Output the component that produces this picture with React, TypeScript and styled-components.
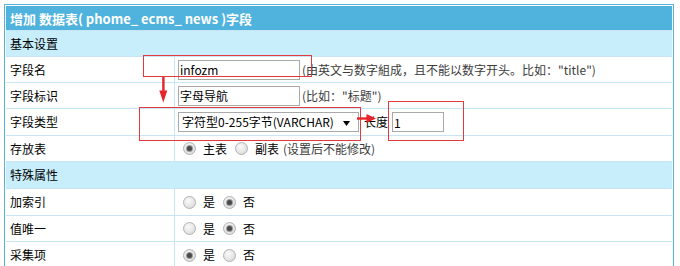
import React from "react";
import styled, { createGlobalStyle } from "styled-components";

const GlobalStyle = createGlobalStyle`
  html, body { margin: 0; padding: 0; background: #fff; }
  body {
    font-family: "Noto Sans CJK SC", sans-serif;
    font-size: 12px;
    color: #000;
  }
`;

const Page = styled.div`
  position: relative;
  width: 680px;
  height: 266px;
  overflow: hidden;
  box-sizing: border-box;
  padding: 4px 0 0 4px;
`;

const Frame = styled.div`
  width: 670px;
  box-sizing: border-box;
  border: 1px solid #58b3dd;
  padding: 1px;
  background: #fff;
`;

const Grid = styled.div`
  display: grid;
  grid-template-columns: 168px 497px;
  gap: 1px;
  background: #c6e6f6;
`;

const Header = styled.div`
  grid-column: 1 / -1;
  height: 24px;
  box-sizing: border-box;
  padding-left: 4px;
  display: flex;
  align-items: center;
  background: #4fb3dd;
  color: #fff;
  font-family: "Noto Sans CJK SC", sans-serif;
  font-weight: bold;
  font-size: 13px;
  white-space: pre;
`;

const Section = styled.div<{ $h: number }>`
  grid-column: 1 / -1;
  height: ${(p) => p.$h}px;
  box-sizing: border-box;
  padding-left: 4px;
  display: flex;
  align-items: center;
  background: #c8eefc;
  line-height: 16px;
`;

const Label = styled.div<{ $h: number }>`
  height: ${(p) => p.$h}px;
  box-sizing: border-box;
  padding-left: 4px;
  display: flex;
  align-items: center;
  background: #fff;
  line-height: 16px;
`;

const Value = styled.div<{ $h: number }>`
  height: ${(p) => p.$h}px;
  box-sizing: border-box;
  padding-left: 3px;
  display: flex;
  align-items: center;
  background: #fff;
  line-height: 16px;
  white-space: nowrap;
`;

const TextInput = styled.input<{ $w: number }>`
  width: ${(p) => p.$w}px;
  height: 20px;
  box-sizing: border-box;
  margin: 0;
  padding: 0 1px;
  border: 1px solid #a9a9a9;
  background: #fff;
  font-family: "Noto Sans CJK SC", sans-serif;
  font-size: 12px;
  color: #000;
  outline: none;
`;

const Hint = styled.span<{ $gap?: number }>`
  margin-left: ${(p) => p.$gap ?? 2}px;
  color: #3c3c3c;
`;

const SelectBox = styled.div`
  width: 181px;
  height: 20px;
  box-sizing: border-box;
  border: 1px solid #a9a9a9;
  background: #fff;
  padding: 0 8px 0 3px;
  display: flex;
  align-items: center;
  justify-content: space-between;
  color: #000;
`;

const Caret = styled.svg`
  margin-top: 3px;
  flex: none;
`;

const Plain = styled.span<{ $gap: number }>`
  margin-left: ${(p) => p.$gap}px;
`;

const RadioDot = styled.span<{ $checked?: boolean; $first?: boolean }>`
  width: 13px;
  height: 13px;
  flex: none;
  box-sizing: border-box;
  border-radius: 50%;
  border: 1px solid #b2b2b2;
  background: radial-gradient(circle at 40% 35%, #fafafa 0%, #e6e6e6 55%, #cfcfcf 100%);
  margin-left: ${(p) => (p.$first ? 5 : 8)}px;
  margin-right: 7px;
  display: flex;
  align-items: center;
  justify-content: center;
  &::after {
    content: "";
    display: ${(p) => (p.$checked ? "block" : "none")};
    width: 5px;
    height: 5px;
    border-radius: 50%;
    background: #4a4a4a;
    box-shadow: 0 0 0 1px #9a9a9a;
  }
`;

const RedBox = styled.div<{ $x: number; $y: number; $w: number; $h: number }>`
  position: absolute;
  left: ${(p) => p.$x}px;
  top: ${(p) => p.$y}px;
  width: ${(p) => p.$w}px;
  height: ${(p) => p.$h}px;
  box-sizing: border-box;
  border: 1px solid #e33b3b;
  pointer-events: none;
`;

const ArrowSvg = styled.svg<{ $x: number; $y: number }>`
  position: absolute;
  left: ${(p) => p.$x}px;
  top: ${(p) => p.$y}px;
  pointer-events: none;
`;

type RadioOpt = { label: string; checked?: boolean };

const RadioGroup: React.FC<{ options: RadioOpt[]; hint?: string }> = ({ options, hint }) => (
  <>
    {options.map((o, i) => (
      <React.Fragment key={o.label}>
        <RadioDot $checked={o.checked} $first={i === 0} />
        <span>{o.label}</span>
      </React.Fragment>
    ))}
    {hint && <Hint $gap={4}>{hint}</Hint>}
  </>
);

export default function App() {
  return (
    <>
      <GlobalStyle />
      <Page>
        <Frame>
          <Grid>
            <Header>增加 数据表( phome_ ecms_ news )字段</Header>

            <Section $h={25}>基本设置</Section>

            <Label $h={25}>字段名</Label>
            <Value $h={25}>
              <TextInput $w={122} defaultValue="infozm" />
              <Hint>(由英文与数字組成，且不能以数字开头。比如："title")</Hint>
            </Value>

            <Label $h={25}>字段标识</Label>
            <Value $h={25}>
              <TextInput $w={122} defaultValue="字母导航" />
              <Hint>(比如："标题")</Hint>
            </Value>

            <Label $h={26}>字段类型</Label>
            <Value $h={26}>
              <SelectBox>
                <span>字符型0-255字节(VARCHAR)</span>
                <Caret width="7" height="5" viewBox="0 0 7 5">
                  <path d="M0 0H7L3.5 5Z" fill="#000" />
                </Caret>
              </SelectBox>
              <Plain $gap={5}>长度</Plain>
              <Plain $gap={4}>
                <TextInput $w={52} defaultValue="1" />
              </Plain>
            </Value>

            <Label $h={25}>存放表</Label>
            <Value $h={25}>
              <RadioGroup
                options={[{ label: "主表", checked: true }, { label: "副表" }]}
                hint="(设置后不能修改)"
              />
            </Value>

            <Section $h={26}>特殊属性</Section>

            <Label $h={26}>加索引</Label>
            <Value $h={26}>
              <RadioGroup options={[{ label: "是" }, { label: "否", checked: true }]} />
            </Value>

            <Label $h={25}>值唯一</Label>
            <Value $h={25}>
              <RadioGroup options={[{ label: "是" }, { label: "否", checked: true }]} />
            </Value>

            <Label $h={26}>采集项</Label>
            <Value $h={26}>
              <RadioGroup options={[{ label: "是", checked: true }, { label: "否" }]} />
            </Value>
          </Grid>
        </Frame>

        <RedBox $x={143} $y={55} $w={169} $h={22} />
        <RedBox $x={139} $y={107} $w={222} $h={34} />
        <RedBox $x={388} $y={101} $w={76} $h={40} />

        <ArrowSvg $x={158} $y={77} width="11" height="26" viewBox="0 0 11 26">
          <rect x="4.2" y="0" width="2.4" height="14" fill="#e8242a" />
          <path d="M1.3 13.5H9.3L5.3 25.5Z" fill="#e8242a" />
        </ArrowSvg>

        <ArrowSvg $x={356} $y={113} width="21" height="11" viewBox="0 0 21 11">
          <rect x="1" y="4.3" width="10" height="2.4" fill="#e8242a" />
          <path d="M10.5 1V10L20 5.5Z" fill="#e8242a" />
        </ArrowSvg>
      </Page>
    </>
  );
}
